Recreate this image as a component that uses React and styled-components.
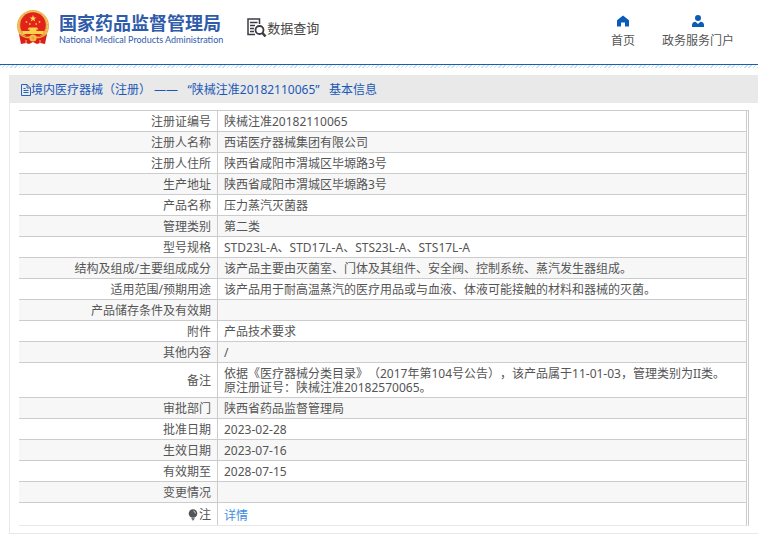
import React from "react";
import styled, { createGlobalStyle } from "styled-components";

const GlobalStyle = createGlobalStyle`
  * {
    box-sizing: border-box;
  }

  body {
    margin: 0;
    background: #fff;
    color: #555;
    font-family: "Noto Sans", "Noto Sans CJK SC", sans-serif;
    font-size: 12px;
    line-height: 14px;
    text-spacing-trim: space-all;
  }
`;

const rows = [
  { label: "注册证编号", value: "陕械注准20182110065" },
  { label: "注册人名称", value: "西诺医疗器械集团有限公司" },
  { label: "注册人住所", value: "陕西省咸阳市渭城区毕塬路3号" },
  { label: "生产地址", value: "陕西省咸阳市渭城区毕塬路3号" },
  { label: "产品名称", value: "压力蒸汽灭菌器" },
  { label: "管理类别", value: "第二类" },
  { label: "型号规格", value: "STD23L-A、STD17L-A、STS23L-A、STS17L-A" },
  { label: "结构及组成/主要组成成分", value: "该产品主要由灭菌室、门体及其组件、安全阀、控制系统、蒸汽发生器组成。" },
  { label: "适用范围/预期用途", value: "该产品用于耐高温蒸汽的医疗用品或与血液、体液可能接触的材料和器械的灭菌。" },
  { label: "产品储存条件及有效期", value: "" },
  { label: "附件", value: "产品技术要求" },
  { label: "其他内容", value: "/" },
  {
    label: "备注",
    value: "依据《医疗器械分类目录》（2017年第104号公告），该产品属于11-01-03，管理类别为II类。\n原注册证号：陕械注准20182570065。",
  },
  { label: "审批部门", value: "陕西省药品监督管理局" },
  { label: "批准日期", value: "2023-02-28" },
  { label: "生效日期", value: "2023-07-16" },
  { label: "有效期至", value: "2028-07-15" },
  { label: "变更情况", value: "" },
];

const Emblem = () => (
  <svg width="34" height="36" viewBox="0 0 34 36" aria-hidden="true">
    <circle cx="17" cy="17" r="16" fill="#e9b04a" />
    <circle cx="17" cy="17" r="14.6" fill="none" stroke="#f6d27a" strokeWidth="1" strokeDasharray="2 1" />
    <circle cx="17" cy="16" r="12.8" fill="#e2231a" />
    <path d="M3 25 L13 28 L17 26 L21 28 L31 25 L29 35 L24 34 L21 35 L17 33 L13 35 L10 34 L5 35 Z" fill="#d9201a" />
    <path d="M17 6 L17.9 8.5 L20.5 8.5 L18.4 10.1 L19.2 12.6 L17 11.1 L14.8 12.6 L15.6 10.1 L13.5 8.5 L16.1 8.5 Z" fill="#fbd95b" />
    <g fill="#f5b944">
      <circle cx="10.5" cy="13" r="0.9" />
      <circle cx="13.8" cy="15" r="0.9" />
      <circle cx="20.2" cy="15" r="0.9" />
      <circle cx="23.5" cy="13" r="0.9" />
    </g>
    <path d="M13 18.5 L21 18.5 L22.5 20.5 L20.5 20.5 L20.5 22 L28 22 L27 25 L7 25 L6 22 L13.5 22 L13.5 20.5 L11.5 20.5 Z" fill="#fbd04d" />
    <path d="M4 25 Q10 30 14 28 M30 25 Q24 30 20 28" fill="none" stroke="#f0b040" strokeWidth="1.4" />
    <circle cx="17" cy="29" r="3.6" fill="#f6bf45" />
    <circle cx="17" cy="29" r="1.6" fill="#f0a23a" />
    <path d="M10 31 L10 34 M24 31 L24 34" stroke="#f0a83c" strokeWidth="1.2" />
  </svg>
);

const SearchDocIcon = () => (
  <svg width="20" height="20" viewBox="0 0 20 20" fill="none" stroke="#3b3b45" aria-hidden="true">
    <path d="M12.5 6 V1 H1 V16.5 H8" strokeWidth="1.5" />
    <path d="M3 4.5 H10.5 M3 7.5 H8 M3 10.5 H7 M3 13.5 H7" strokeWidth="1.3" />
    <circle cx="12.5" cy="12" r="4" strokeWidth="1.8" />
    <path d="M15.5 15 L18.5 18.5" strokeWidth="2.6" />
  </svg>
);

const HomeIcon = () => (
  <svg width="14" height="12" viewBox="0 0 14 12" fill="#0b5cb8" aria-hidden="true">
    <path d="M7 0.5 L13 5.2 V11.5 H9 V7.5 H5 V11.5 H1 V5.2 Z" />
  </svg>
);

const UserIcon = () => (
  <svg width="14" height="12" viewBox="0 0 14 12" fill="#0b5cb8" aria-hidden="true">
    <circle cx="7" cy="3" r="3" />
    <path d="M1 12 V10 Q1 7 4.5 6.8 L7 9 L9.5 6.8 Q13 7 13 10 V12 Z" />
  </svg>
);

const FileIcon = () => (
  <svg width="10" height="12" viewBox="0 0 10 12" fill="none" stroke="#2a62bd" aria-hidden="true">
    <path d="M0.5 0.5 H6 L9.5 4 V11.5 H0.5 Z M6 0.5 V4 H9.5" />
    <path d="M2.5 4.5 H4.5 M2.5 6.5 H7.5 M2.5 8.5 H7.5" />
  </svg>
);

const BulbIcon = () => (
  <svg width="10" height="12" viewBox="0 0 10 12" aria-hidden="true">
    <circle cx="5" cy="4.5" r="4.3" fill="#555" />
    <path d="M3.5 9 H6.5 V10 L5.5 11.5 H4.5 L3.5 10 Z" fill="#777" />
    <path d="M5.5 2 Q7.4 2.6 7.3 4.5" fill="none" stroke="#ccc" />
  </svg>
);

export default function App() {
  return (
    <>
      <GlobalStyle />
      <Header>
        <Brand>
          <Emblem />
          <div>
            <BrandName>国家药品监督管理局</BrandName>
            <BrandSub>National Medical Products Administration</BrandSub>
          </div>
        </Brand>
        <Section>
          <SearchDocIcon />
          <span>数据查询</span>
        </Section>
        <Nav>
          <NavLink href="#home">
            <HomeIcon />
            首页
          </NavLink>
          <NavLink href="#portal">
            <UserIcon />
            政务服务门户
          </NavLink>
        </Nav>
      </Header>
      <Hatch />

      <Panel>
        <PanelTitle>
          <FileIcon />
          境内医疗器械（注册） ——   “陕械注准20182110065”   基本信息
        </PanelTitle>
        <TableFrame>
          <Table>
            <tbody>
              {rows.map((row) => (
                <Row key={row.label}>
                  <Label scope="row">{row.label}</Label>
                  <Value>{row.value}</Value>
                </Row>
              ))}
              <Row>
                <Label scope="row">
                  <Note>
                    <BulbIcon />注
                  </Note>
                </Label>
                <Value $last>
                  <DetailLink href="#detail">详情</DetailLink>
                </Value>
              </Row>
            </tbody>
          </Table>
        </TableFrame>
      </Panel>
    </>
  );
}

const Header = styled.header`
  display: flex;
  align-items: flex-start;
  height: 65px;
  padding: 9px 24px 0 16px;
  border-bottom: 1px solid #1c5fa8;
`;

const Brand = styled.div`
  display: flex;
  gap: 9px;
`;

const BrandName = styled.h1`
  margin: 3px 0 0;
  color: #2f5bab;
  font-size: 18px;
  font-weight: 700;
  line-height: 22px;
`;

const BrandSub = styled.p`
  margin: 0;
  color: #2f5bab;
  font-family: Lato, sans-serif;
  font-size: 9px;
  line-height: 12px;
`;

const Section = styled.div`
  display: flex;
  align-items: center;
  margin: 9px 0 0 24px;
  color: #444;
  font-size: 13px;
  line-height: 20px;
`;

const Nav = styled.nav`
  display: flex;
  gap: 27px;
  margin: 6px 0 0 auto;
`;

const NavLink = styled.a`
  display: flex;
  flex-direction: column;
  align-items: center;
  gap: 7px;
  color: #555;
  text-decoration: none;
`;

const Hatch = styled.div`
  height: 3px;
  background: repeating-linear-gradient(135deg, #c5e2f3 0 1px, #fff 1px 3px);
`;

const Panel = styled.main`
  margin: 7px 0 0 9px;
  padding-bottom: 7px;
  border-left: 1px solid #e8e8e8;
  border-bottom: 1px solid #e8e8e8;
`;

const PanelTitle = styled.h2`
  display: flex;
  align-items: center;
  height: 28px;
  margin: 0 0 7px;
  padding: 2px 0 0 11px;
  background: #e9e9e9;
  color: #1a58b8;
  font-size: 12px;
  font-weight: 400;
  white-space: pre;
`;

const TableFrame = styled.div`
  margin: 0 9px;
  border-top: 1px solid #ccc;
  border-right: 3px double #ccc;
  border-bottom: 1px solid #e8e8e8;
`;

const Table = styled.table`
  width: 100%;
  border-collapse: separate;
  border-spacing: 0;
`;

const Label = styled.th`
  width: 199px;
  padding: 4px 6px 2px;
  border-right: 1px solid #ccc;
  font-weight: 400;
  text-align: right;
`;

const Value = styled.td`
  height: ${(props) => (props.$last ? "22px" : "20px")};
  padding: ${(props) => (props.$last ? "6px 6px 2px" : "4px 6px 2px")};
  white-space: pre-line;
`;

const Row = styled.tr`
  &:nth-child(even) {
    background: #f7f7f7;
  }

  &:not(:last-child) > * {
    border-bottom: 1px solid #ccc;
  }
`;

const Note = styled.span`
  display: flex;
  align-items: center;
  justify-content: flex-end;
  gap: 1px;
`;

const DetailLink = styled.a`
  color: #3d8de0;
  text-decoration: none;
`;
